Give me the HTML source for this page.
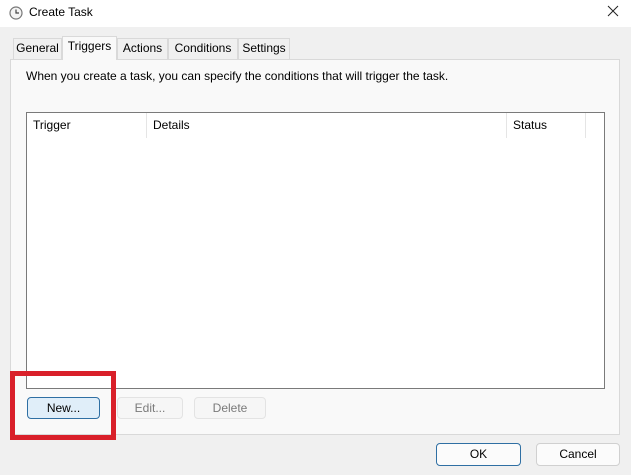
<!DOCTYPE html>
<html><head><style>
*{margin:0;padding:0;box-sizing:border-box}
body{width:631px;height:475px;background:#f0f0f0;font-family:"Liberation Sans",sans-serif;font-size:12px;color:#000;position:relative;overflow:hidden}
.abs{position:absolute}
.title{left:0;top:0;width:631px;height:27px;background:#fff}
.tab{position:absolute;top:38px;height:21px;border:1px solid #d9d9d9;border-bottom:none;background:#f0f0f0;text-align:center;line-height:19px}
.btn{position:absolute;height:22px;border:1px solid #d0d0d0;border-radius:4px;background:#fbfbfb;text-align:center;line-height:20px}
</style></head><body>
<div class="abs title"></div>
<svg class="abs" style="left:9px;top:6px" width="14" height="14" viewBox="0 0 14 14"><circle cx="7" cy="7" r="6" fill="#f4f4f4" stroke="#777" stroke-width="1.2"/><path d="M7 3.5V7H10" stroke="#444" stroke-width="1.2" fill="none"/></svg>
<div class="abs" style="left:29px;top:5px;font-size:12px">Create Task</div>
<svg class="abs" style="left:607px;top:5px" width="12" height="12" viewBox="0 0 12 12"><path d="M1 1L11 11M11 1L1 11" stroke="#222" stroke-width="1"/></svg>
<div class="abs" style="left:10px;top:59px;width:610px;height:376px;background:#f9f9f9;border:1px solid #d9d9d9"></div>
<div class="tab" style="left:13px;width:49px">General</div>
<div class="tab" style="left:62px;top:36px;width:55px;height:24px;background:#f9f9f9;z-index:2">Triggers</div>
<div class="tab" style="left:117px;width:51px">Actions</div>
<div class="tab" style="left:168px;width:70px">Conditions</div>
<div class="tab" style="left:238px;width:52px">Settings</div>
<div class="abs" style="left:26px;top:69px">When you create a task, you can specify the conditions that will trigger the task.</div>
<div class="abs" style="left:26px;top:112px;width:579px;height:277px;background:#fff;border:1px solid #7a7a7a"></div>
<div class="abs" style="left:146px;top:113px;width:1px;height:25px;background:#e5e5e5"></div>
<div class="abs" style="left:506px;top:113px;width:1px;height:25px;background:#e5e5e5"></div>
<div class="abs" style="left:585px;top:113px;width:1px;height:25px;background:#e5e5e5"></div>
<div class="abs" style="left:33px;top:118px">Trigger</div>
<div class="abs" style="left:153px;top:118px">Details</div>
<div class="abs" style="left:513px;top:118px">Status</div>
<div class="btn" style="left:27px;top:397px;width:73px;background:#e0eef9;border-color:#2f6fa3">New...</div>
<div class="btn" style="left:117px;top:397px;width:66px;color:#7a7a7a;border-color:#e3e3e3;background:#f6f6f6">Edit...</div>
<div class="btn" style="left:194px;top:397px;width:72px;color:#7a7a7a;border-color:#e3e3e3;background:#f6f6f6">Delete</div>
<div class="abs" style="left:10px;top:371px;width:106px;height:69px;border:5px solid #d9202a"></div>
<div class="btn" style="left:436px;top:443px;width:85px;height:23px;border-color:#2f6fa3">OK</div>
<div class="btn" style="left:536px;top:443px;width:84px;height:23px">Cancel</div>
</body></html>
